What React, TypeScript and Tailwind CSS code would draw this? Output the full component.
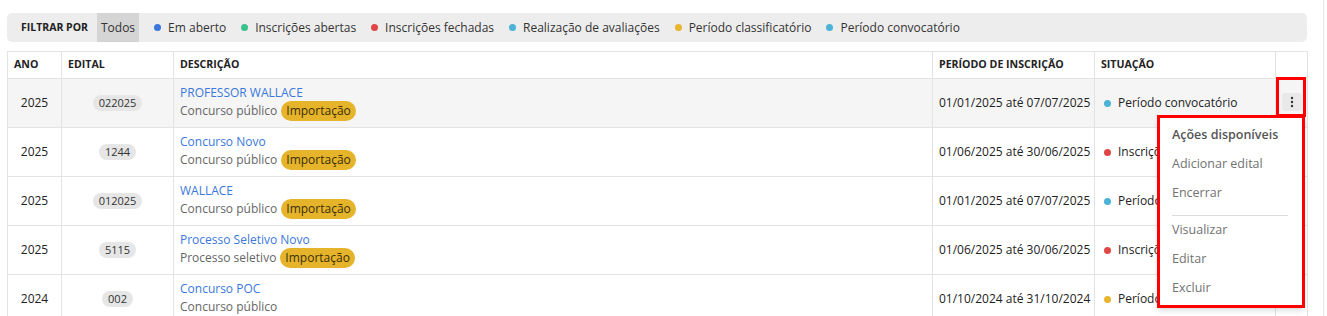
import React from "react";

const font = { fontFamily: '"Open Sans", "Noto Sans", sans-serif' };

type Row = {
  ano: string;
  edital: string;
  titulo: string;
  tipo: string;
  importacao: boolean;
  periodo: string;
  situacao: string;
  cor: string;
};

const filtros = [
  { label: "Em aberto", cor: "bg-[#3a76db]" },
  { label: "Inscrições abertas", cor: "bg-[#3cc08d]" },
  { label: "Inscrições fechadas", cor: "bg-[#e04646]" },
  { label: "Realização de avaliações", cor: "bg-[#4cb2d6]" },
  { label: "Período classificatório", cor: "bg-[#eab52e]" },
  { label: "Período convocatório", cor: "bg-[#4cb2d6]" },
];

const rows: Row[] = [
  {
    ano: "2025",
    edital: "022025",
    titulo: "PROFESSOR WALLACE",
    tipo: "Concurso público",
    importacao: true,
    periodo: "01/01/2025 até 07/07/2025",
    situacao: "Período convocatório",
    cor: "bg-[#4cb2d6]",
  },
  {
    ano: "2025",
    edital: "1244",
    titulo: "Concurso Novo",
    tipo: "Concurso público",
    importacao: true,
    periodo: "01/06/2025 até 30/06/2025",
    situacao: "Inscrições fechadas",
    cor: "bg-[#e04646]",
  },
  {
    ano: "2025",
    edital: "012025",
    titulo: "WALLACE",
    tipo: "Concurso público",
    importacao: true,
    periodo: "01/01/2025 até 07/07/2025",
    situacao: "Período convocatório",
    cor: "bg-[#4cb2d6]",
  },
  {
    ano: "2025",
    edital: "5115",
    titulo: "Processo Seletivo Novo",
    tipo: "Processo seletivo",
    importacao: true,
    periodo: "01/06/2025 até 30/06/2025",
    situacao: "Inscrições fechadas",
    cor: "bg-[#e04646]",
  },
  {
    ano: "2024",
    edital: "002",
    titulo: "Concurso POC",
    tipo: "Concurso público",
    importacao: false,
    periodo: "01/10/2024 até 31/10/2024",
    situacao: "Período classificatório",
    cor: "bg-[#eab52e]",
  },
];

const acoes = ["Adicionar edital", "Encerrar"];
const acoesItem = ["Visualizar", "Editar", "Excluir"];

function KebabIcon() {
  return (
    <svg width="4" height="12" viewBox="0 0 4 12">
      <circle cx="2" cy="2" r="1.2" fill="#333" />
      <circle cx="2" cy="6" r="1.2" fill="#333" />
      <circle cx="2" cy="10" r="1.2" fill="#333" />
    </svg>
  );
}

export default function App() {
  return (
    <div
      className="h-[316px] w-[1324px] overflow-hidden border-r border-[#e6e6e6] bg-white pl-[7px] pr-[16px] pt-[13px]"
      style={font}
    >
      {/* barra de filtros */}
      <div className="flex h-[29px] items-center rounded-[5px] bg-[#ededed] pl-[14px] text-[12px] text-[#333]">
        <span className="text-[10.5px] font-bold text-[#222]">FILTRAR POR</span>
        <span className="ml-[9px] flex h-full items-center bg-[#d5d5d5] px-[4px] text-[#333]">
          Todos
        </span>
        <div className="ml-[15px] flex items-center gap-[15px]">
          {filtros.map((f) => (
            <div key={f.label} className="flex items-center gap-[7px]">
              <span className={`h-[7px] w-[7px] rounded-full ${f.cor}`} />
              <span>{f.label}</span>
            </div>
          ))}
        </div>
      </div>

      {/* tabela */}
      <div className="relative mt-[9px]">
        <table className="w-[1300px] table-fixed border-collapse text-[12px] text-[#222]">
          <colgroup>
            <col className="w-[54px]" />
            <col className="w-[112px]" />
            <col className="w-[759px]" />
            <col className="w-[162px]" />
            <col className="w-[181px]" />
            <col className="w-[32px]" />
          </colgroup>
          <thead>
            <tr className="h-[27px] text-left text-[10.6px] text-[#222]">
              <th className="border border-[#e3e3e3] px-[6px] font-bold">ANO</th>
              <th className="border border-[#e3e3e3] px-[6px] font-bold">EDITAL</th>
              <th className="border border-[#e3e3e3] px-[6px] font-bold">DESCRIÇÃO</th>
              <th className="border border-[#e3e3e3] px-[6px] font-bold">
                PERÍODO DE INSCRIÇÃO
              </th>
              <th className="border border-[#e3e3e3] px-[6px] font-bold">SITUAÇÃO</th>
              <th className="border border-[#e3e3e3]" />
            </tr>
          </thead>
          <tbody>
            {rows.map((r, i) => (
              <tr key={r.edital} className={`h-[49px] ${i === 0 ? "bg-[#f5f5f5]" : ""}`}>
                <td className="border border-[#e3e3e3] text-center">{r.ano}</td>
                <td className="border border-[#e3e3e3] text-center">
                  <span className="inline-block rounded-full bg-[#e6e6e6] px-[6px] text-[11px] leading-[16px] text-[#333]">
                    {r.edital}
                  </span>
                </td>
                <td className="border border-[#e3e3e3] px-[6px] align-top">
                  <div className="pt-[5px] leading-[17px] text-[#3a78dc]">{r.titulo}</div>
                  <div className="flex h-[20px] items-center gap-[4px] text-[#666]">
                    <span>{r.tipo}</span>
                    {r.importacao && (
                      <span className="rounded-full bg-[#e6b42b] px-[5px] leading-[20px] text-[#3b2e08]">
                        Importação
                      </span>
                    )}
                  </div>
                </td>
                <td className="whitespace-nowrap border border-[#e3e3e3] px-[6px]">
                  {r.periodo}
                </td>
                <td className="border border-[#e3e3e3] px-[9px]">
                  <div className="flex items-center gap-[7px]">
                    <span className={`h-[7px] w-[7px] rounded-full ${r.cor}`} />
                    <span className="whitespace-nowrap">{r.situacao}</span>
                  </div>
                </td>
                <td className="border border-[#e3e3e3] text-center">
                  {i === 0 && (
                    <span className="inline-flex h-[18px] w-[20px] items-center justify-center rounded-[3px] bg-[#e9e9e9]">
                      <KebabIcon />
                    </span>
                  )}
                </td>
              </tr>
            ))}
          </tbody>
        </table>

        {/* destaque do botão */}
        <div className="pointer-events-none absolute left-[1269px] top-[26px] h-[40px] w-[30px] border-[3px] border-[#f00]" />

        {/* menu de ações */}
        <div className="absolute left-[1150px] top-[64px] h-[193px] w-[148px] border-[3px] border-[#f00] bg-white pl-[12px] pt-[5px] text-[12.5px] text-[#727272] shadow-md">
          <div className="mb-[5px] flex h-[24px] items-center font-semibold text-[#555]">
            Ações disponíveis
          </div>
          {acoes.map((a) => (
            <div key={a} className="mb-[5px] flex h-[24px] items-center">
              {a}
            </div>
          ))}
          <div className="mb-[2px] mr-[14px] mt-[10px] border-t border-[#dcdcdc]" />
          {acoesItem.map((a) => (
            <div key={a} className="mb-[5px] flex h-[24px] items-center">
              {a}
            </div>
          ))}
        </div>
      </div>
    </div>
  );
}
